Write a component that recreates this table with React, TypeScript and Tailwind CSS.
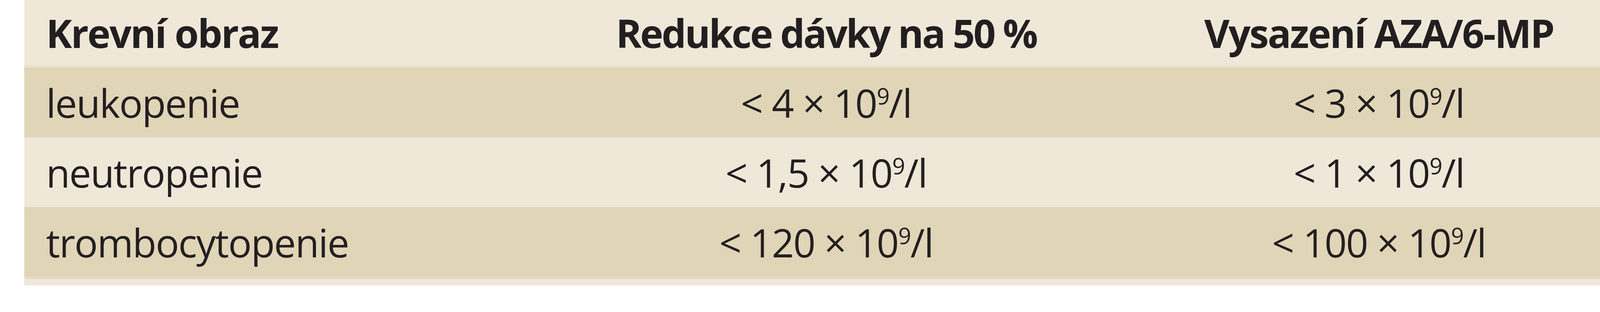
type Row = { name: string; reduce: string; stop: string; dark: boolean }

const data: Row[] = [
  { name: 'leukopenie', reduce: '< 4', stop: '< 3', dark: true },
  { name: 'neutropenie', reduce: '< 1,5', stop: '< 1', dark: false },
  { name: 'trombocytopenie', reduce: '< 120', stop: '< 100', dark: true },
]

function Value({ prefix }: { prefix: string }) {
  return (
    <span className="whitespace-nowrap">
      {prefix} × 10<span className="align-super text-[58px] leading-none">9</span>/l
    </span>
  )
}

export default function App() {
  return (
    <div className="w-full h-[800px] overflow-hidden bg-white font-['Open_Sans',sans-serif] text-[#231f20]">
      <div className="ml-[62px] w-[4162px]">
        <div className="grid grid-cols-[1332px_1442px_1388px] h-[168px] items-center bg-[#efe8d9] text-[100px] font-bold tracking-[-3px] leading-none">
          <div className="pl-[56px]">Krevní obraz</div>
          <div className="text-center tracking-[-4px]">Redukce dávky na 50 %</div>
          <div className="text-center">Vysazení AZA/6-MP</div>
        </div>
        <div className="h-[5px] bg-[#e9e1cc]" />
        {data.map((row) => (
          <div
            key={row.name}
            className={`grid grid-cols-[1332px_1442px_1388px] h-[179px] items-center text-[100px] tracking-[-2px] leading-none ${
              row.dark ? 'bg-[#e0d5b7]' : 'bg-[#efe8d9]'
            }`}
          >
            <div className="pl-[56px]">{row.name}</div>
            <div className="text-center">
              <Value prefix={row.reduce} />
            </div>
            <div className="text-center">
              <Value prefix={row.stop} />
            </div>
          </div>
        ))}
        <div className="h-[5px] bg-[#e6dcc3]" />
        <div className="h-[17px] bg-[#efe8d9]" />
      </div>
    </div>
  )
}
